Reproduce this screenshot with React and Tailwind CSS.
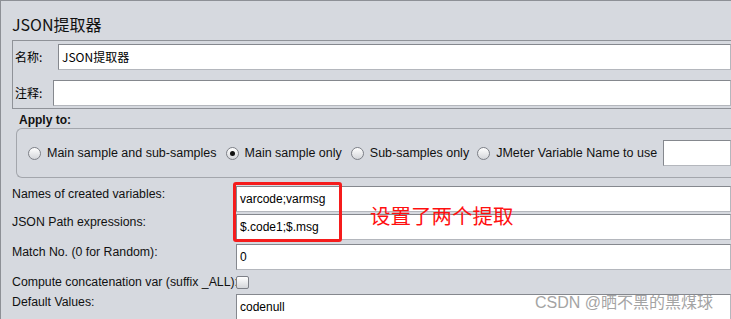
import React from "react";

const FONT = { fontFamily: '"Liberation Sans", Arial, "Noto Sans CJK SC", sans-serif' };
const CJK = { fontFamily: '"Noto Sans CJK SC", "Liberation Sans", sans-serif' };

const Radio = ({ checked }) => (
  <span className="w-[13px] h-[13px] rounded-full border border-[#7d8087] bg-gradient-to-b from-[#ffffff] to-[#d4d6da] flex items-center justify-center shrink-0">
    {checked && <span className="w-[5px] h-[5px] rounded-full bg-[#111]" />}
  </span>
);

const Field = ({ value, className = "" }) => (
  <div className={`flex-1 h-[26px] bg-white border border-[#b4b7bd] border-t-[#85888e] border-l-[#85888e] flex items-center pl-[3px] text-[12px] text-black ${className}`}>
    {value}
  </div>
);

const Row = ({ label, value, h = "h-[30px]" }) => (
  <div className={`flex ${h}`}>
    <div className="w-[224px] pt-[1px] text-[12.3px] leading-[14px] text-[#111] whitespace-nowrap">{label}</div>
    <Field value={value} />
  </div>
);

export default function App() {
  return (
    <div className="w-[731px] h-[319px] bg-[#d6d9df] border-l border-t border-[#8d9096] relative overflow-hidden" style={FONT}>
      <div className="pl-[11px] pt-[11px] h-[38px] text-[16px] text-[#111]" style={CJK}>JSON提取器</div>

      {/* name/comment */}
      <div className="ml-[11px] mt-[1px] border-t border-l border-b border-[#8f9298] pt-[2px] pb-[2px]">
        <div className="flex items-center h-[27px]">
          <span className="w-[45px] text-[12px] pl-[2px]" style={CJK}>名称:</span>
          <Field value={<span style={CJK}>JSON提取器</span>} />
        </div>
        <div className="flex items-center h-[27px] mt-[9px]">
          <span className="w-[40px] text-[12px] pl-[2px]" style={CJK}>注释:</span>
          <Field value="" />
        </div>
      </div>

      {/* apply to */}
      <div className="pl-[18px] pt-[2px] h-[19px] text-[12px] font-bold text-[#111]">Apply to:</div>
      <div className="ml-[15px] h-[50px] border border-[#a3a6ac] rounded-l-[6px] border-r-0 flex items-center pl-[11px] gap-[6px] text-[12.5px] text-[#111]">
        <Radio />
        <span className="mr-[3px]">Main sample and sub-samples</span>
        <Radio checked />
        <span className="mr-[3px]">Main sample only</span>
        <Radio />
        <span className="mr-[2px]">Sub-samples only</span>
        <Radio />
        <span>JMeter Variable Name to use</span>
        <Field value="" className="h-[25px]" />
      </div>

      {/* extractor settings */}
      <div className="pl-[11px] pt-[8px]">
        <Row label="Names of created variables:" value="varcode;varmsg" h="h-[28px]" />
        <Row label="JSON Path expressions:" value="$.code1;$.msg" h="h-[30px]" />
        <Row label="Match No. (0 for Random):" value="0" h="h-[26px]" />
        <div className="flex items-center h-[24px]">
          <span className="w-[224px] text-[12.3px] text-[#111] whitespace-nowrap">Compute concatenation var (suffix _ALL):</span>
          <span className="w-[13px] h-[13px] rounded-[2px] border border-[#7d8087] bg-gradient-to-b from-[#ffffff] to-[#d4d6da]" />
        </div>
        <Row label="Default Values:" value="codenull" h="h-[28px]" />
      </div>

      {/* annotations */}
      <div className="absolute left-[232px] top-[181px] w-[109px] h-[60px] border-[3px] border-[#f51c1c] rounded-[3px]" />
      <div className="absolute left-[369px] top-[204px] text-[20.5px] text-[#ff1010] leading-none" style={CJK}>设置了两个提取</div>
      <div className="absolute left-[534px] top-[290px] text-[16px] text-[#8e8e8e] opacity-80" style={FONT}>CSDN @晒不黑的黑煤球</div>
    </div>
  );
}
